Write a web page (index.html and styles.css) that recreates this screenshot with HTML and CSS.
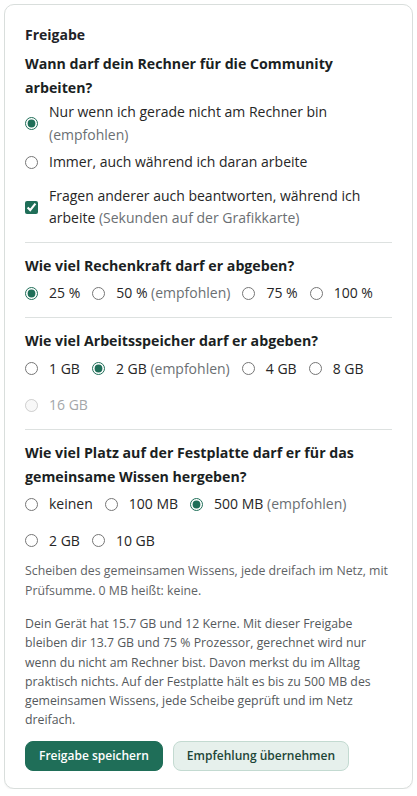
FILE: index.html
```html
<!DOCTYPE html>
<html lang="de">
<head>
<meta charset="utf-8">
<title>Freigabe</title>
<link rel="stylesheet" href="styles.css">
</head>
<body>
<div class="card">
  <h2 class="title">Freigabe</h2>

  <section class="group">
    <h3 class="question">Wann darf dein Rechner für die Community arbeiten?</h3>
    <div class="stack">
      <label class="opt"><input type="radio" name="when" checked><span>Nur wenn ich gerade nicht am Rechner bin <span class="muted">(empfohlen)</span></span></label>
      <label class="opt"><input type="radio" name="when"><span>Immer, auch während ich daran arbeite</span></label>
      <label class="opt opt-check"><input type="checkbox" checked><span>Fragen anderer auch beantworten, während ich arbeite <span class="muted">(Sekunden auf der Grafikkarte)</span></span></label>
    </div>
  </section>

  <hr class="sep">

  <section class="group">
    <h3 class="question">Wie viel Rechenkraft darf er abgeben?</h3>
    <div class="row">
      <label class="opt"><input type="radio" name="cpu" checked><span>25 %</span></label>
      <label class="opt"><input type="radio" name="cpu"><span>50 % <span class="muted">(empfohlen)</span></span></label>
      <label class="opt"><input type="radio" name="cpu"><span>75 %</span></label>
      <label class="opt"><input type="radio" name="cpu"><span>100 %</span></label>
    </div>
  </section>

  <hr class="sep">

  <section class="group">
    <h3 class="question">Wie viel Arbeitsspeicher darf er abgeben?</h3>
    <div class="row">
      <label class="opt"><input type="radio" name="ram"><span>1 GB</span></label>
      <label class="opt"><input type="radio" name="ram" checked><span>2 GB <span class="muted">(empfohlen)</span></span></label>
      <label class="opt"><input type="radio" name="ram"><span>4 GB</span></label>
      <label class="opt"><input type="radio" name="ram"><span>8 GB</span></label>
      <label class="opt is-disabled"><input type="radio" name="ram" disabled><span>16 GB</span></label>
    </div>
  </section>

  <hr class="sep">

  <section class="group">
    <h3 class="question">Wie viel Platz auf der Festplatte darf er für das gemeinsame Wissen hergeben?</h3>
    <div class="row">
      <label class="opt"><input type="radio" name="disk"><span>keinen</span></label>
      <label class="opt"><input type="radio" name="disk"><span>100 MB</span></label>
      <label class="opt"><input type="radio" name="disk" checked><span>500 MB <span class="muted">(empfohlen)</span></span></label>
      <label class="opt"><input type="radio" name="disk"><span>2 GB</span></label>
      <label class="opt"><input type="radio" name="disk"><span>10 GB</span></label>
    </div>
    <p class="hint">Scheiben des gemeinsamen Wissens, jede dreifach im Netz, mit Prüfsumme. 0 MB heißt: keine.</p>
  </section>

  <p class="summary">Dein Gerät hat 15.7 GB und 12 Kerne. Mit dieser Freigabe bleiben dir 13.7 GB und 75 % Prozessor, gerechnet wird nur wenn du nicht am Rechner bist. Davon merkst du im Alltag praktisch nichts. Auf der Festplatte hält es bis zu 500 MB des gemeinsamen Wissens, jede Scheibe geprüft und im Netz dreifach.</p>

  <div class="actions">
    <button class="btn btn-primary" type="button">Freigabe speichern</button>
    <button class="btn btn-secondary" type="button">Empfehlung übernehmen</button>
  </div>
</div>
</body>
</html>
```

FILE: styles.css
```css
* { box-sizing: border-box; }

html, body {
  background: #ffffff;
}

body {
  margin: 4px;
  font-family: "Open Sans", "Noto Sans", "Liberation Sans", sans-serif;
  font-size: 14px;
  line-height: 22.5px;
  color: #1f2328;
}

.card {
  border: 1px solid #d9dedc;
  border-radius: 10px;
  background: #ffffff;
  padding: 20px 20px 17px;
  box-shadow: 0 1px 2px rgba(0, 0, 0, 0.06);
}

.title {
  margin: 0 0 7px;
  font-size: 14px;
  line-height: 20px;
  font-weight: 700;
  color: #1f2328;
}

.question {
  margin: 0 0 4px;
  font-size: 14.2px;
  line-height: 23.5px;
  font-weight: 700;
  color: #1b1f23;
}

.stack {
  display: flex;
  flex-direction: column;
  gap: 5px;
  margin-top: -2px;
}

.opt {
  display: flex;
  align-items: center;
  gap: 11px;
  color: #262626;
}

.opt input {
  margin: 0;
  flex: none;
  width: 13px;
  height: 13px;
  accent-color: #1f6e58;
}

.opt-check {
  margin-top: 6px;
}

.muted {
  color: #6b6f73;
}

.row {
  display: flex;
  flex-wrap: wrap;
  column-gap: 12px;
  row-gap: 12.5px;
  line-height: 24px;
  margin-bottom: 5px;
}

.is-disabled {
  color: #a4a7aa;
}

.sep {
  border: 0;
  border-top: 1px solid #dde1e0;
  margin: 12px 0 11px;
}

.hint {
  margin: 8.5px 0 0;
  font-size: 12.3px;
  line-height: 19.5px;
  color: #5f6366;
}

.summary {
  margin: 14px 0 0;
  padding-right: 8px;
  font-size: 12.3px;
  line-height: 19.3px;
  color: #55595c;
}

.actions {
  display: flex;
  gap: 10px;
  margin-top: 11px;
}

.btn {
  height: 30px;
  padding: 0 13px;
  border-radius: 8px;
  font-family: "Open Sans", "Noto Sans", "Liberation Sans", sans-serif;
  font-size: 12px;
  font-weight: 600;
  cursor: pointer;
}

.btn-primary {
  background: #1f6e58;
  border: 1px solid #1f6e58;
  color: #ffffff;
}

.btn-secondary {
  background: #e6f0ec;
  border: 1px solid #c3dad1;
  color: #1d4537;
}
```
